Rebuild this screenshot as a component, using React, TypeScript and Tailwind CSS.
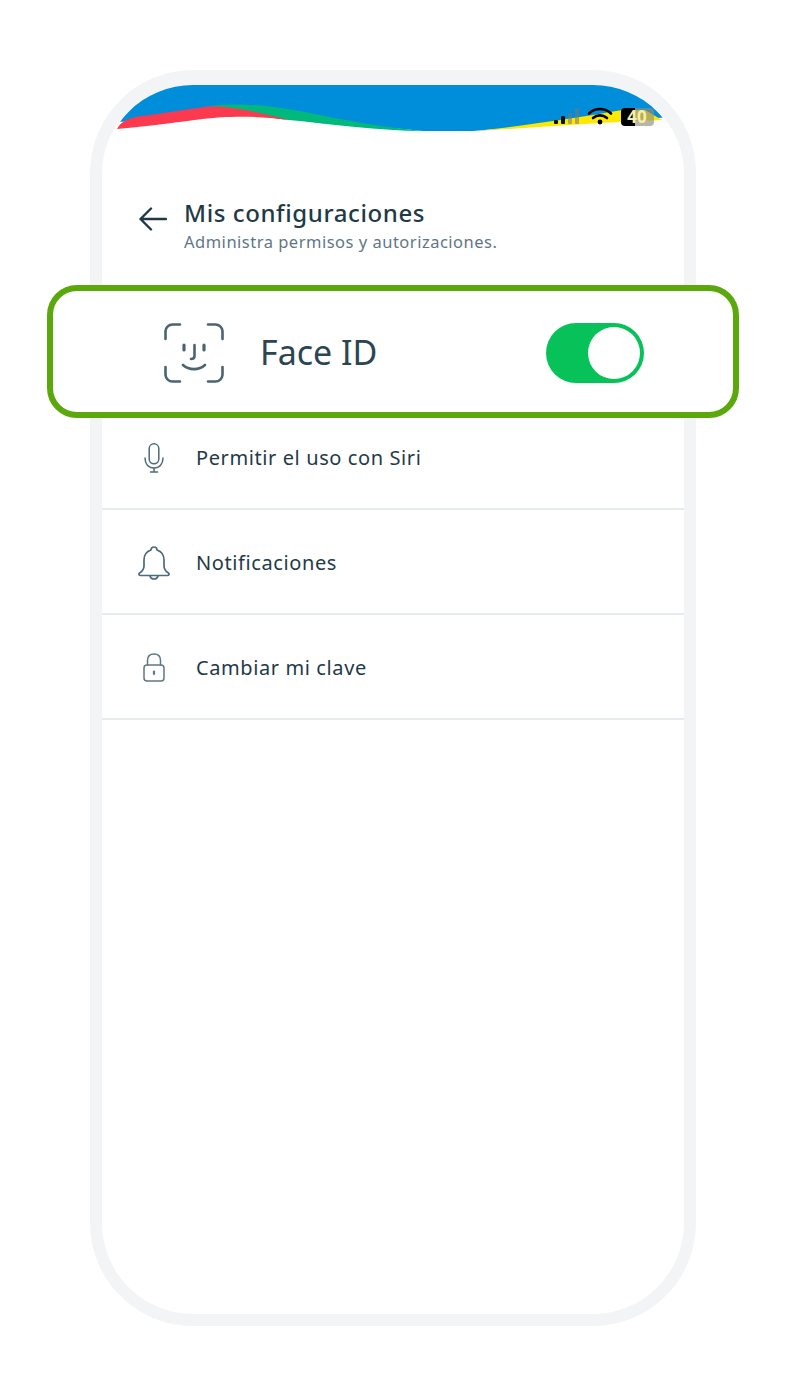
const font = { fontFamily: '"Noto Sans", sans-serif' };

const Wave = () => (
  <svg viewBox="102 85 582 50" className="block h-[50px] w-[582px]">
    <defs>
      <clipPath id="screen-top">
        <path d="M102 176A91 91 0 0 1 193 85H593A91 91 0 0 1 684 176Z" />
      </clipPath>
    </defs>
    <g clipPath="url(#screen-top)">
      <path d="M102 85H684V116L473 131H423L289 118L232 114L118 122L102 126Z" fill="#008edb" />
      <path d="M205 107C225 103 255 104 281 108C320 114 360 125 423 131C380 131 330 124 289 120C265 117 240 112 205 107Z" fill="#00b97a" />
      <path d="M117 129C122 120 130 117 150 115C170 112 190 109 205 107C222 105 250 110 289 120C265 117 245 116 231 117C205 117 175 124 117 129Z" fill="#fb3a4f" />
      <path d="M473 131C515 127 570 119 622 110H645L662 120C600 122 530 128 473 131Z" fill="#ffe800" />
    </g>
    <rect x="554" y="120" width="4" height="4" rx="1" fill="#111" />
    <rect x="561" y="116" width="4" height="8" rx="1" fill="#111" />
    <rect x="568" y="113" width="4" height="11" rx="1" fill="#777" opacity="0.55" />
    <rect x="575" y="108" width="4" height="16" rx="1" fill="#777" opacity="0.55" />
    <g fill="none" stroke="#000" strokeWidth="2.6" strokeLinecap="round">
      <path d="M589 113.500C595 107.500 605 107.500 611 113.500" />
      <path d="M593 118C597 114.500 603 114.500 607 118" />
    </g>
    <circle cx="600" cy="122" r="2.400" fill="#000" />
    <path d="M625 108H635V126H625A4 4 0 0 1 621 122V112A4 4 0 0 1 625 108Z" fill="#000" />
    <path d="M635 108H650A4 4 0 0 1 654 112V122A4 4 0 0 1 650 126H635Z" fill="#8f8f7e" opacity="0.65" />
    <text x="637" y="122.500" textAnchor="middle" fontSize="17" fontWeight="700" fill="#f4efb0" style={font}>40</text>
  </svg>
);

const BackArrow = () => (
  <svg width="28" height="24" viewBox="0 0 28 24" fill="none" stroke="#1f3a47" strokeWidth="2.4" strokeLinecap="round" strokeLinejoin="round">
    <path d="M1.5 12H27M12 1.5L1.5 12L12 22.5" />
  </svg>
);

const FaceIcon = () => (
  <svg width="60" height="60" viewBox="0 0 60 60" fill="none" stroke="#4a6472" strokeWidth="2.6" strokeLinecap="round" strokeLinejoin="round">
    <path d="M1.5 16V8A7 7 0 0 1 8.500 1.500H16M44 1.500H51.500A7 7 0 0 1 58.500 8V16M58.500 44V52A7 7 0 0 1 51.500 58.500H44M16 58.500H8.500A7 7 0 0 1 1.500 52V44" />
    <path d="M20 22V27M40 22V27" strokeWidth="3.200" />
    <path d="M30.500 22V33C30.500 35.500 29 36 27 36" />
    <path d="M19 42C25 47.500 35 47.500 41 42" />
  </svg>
);

const MicIcon = () => (
  <svg width="20" height="30" viewBox="0 0 20 30" fill="none" stroke="#4f6b78" strokeWidth="1.500" strokeLinecap="round">
    <rect x="5.200" y="0.800" width="9.600" height="20" rx="4.800" />
    <path d="M1 15C1 21 4.500 25 10 25C15.500 25 19 21 19 15M10 25V29M6.500 29H13.500" />
  </svg>
);

const BellIcon = () => (
  <svg width="32" height="34" viewBox="0 0 32 34" fill="none" stroke="#4f6b78" strokeWidth="1.700" strokeLinecap="round" strokeLinejoin="round">
    <path d="M16 1C18 1 19 2.500 19 4C23.500 5.500 26 9 26 14V20C26 23 28 25.500 30.500 27C31.500 28 31 29.500 29.500 29.500H2.500C1 29.500 0.500 28 1.500 27C4 25.500 6 23 6 20V14C6 9 8.500 5.500 13 4C13 2.500 14 1 16 1Z" />
    <path d="M12 30C12.500 32 14 33 16 33C18 33 19.500 32 20 30" />
  </svg>
);

const LockIcon = () => (
  <svg width="22" height="29" viewBox="0 0 22 29" fill="none" stroke="#5d7886" strokeWidth="1.500" strokeLinecap="round">
    <rect x="1" y="12" width="20" height="16" rx="3" />
    <path d="M4.500 12V7.500C4.500 3.500 7 1 11 1C15 1 17.500 3.500 17.500 7.500V12" />
    <path d="M11 18.500V21" strokeWidth="2.200" />
  </svg>
);

const rows = [
  { label: "Permitir el uso con Siri", icon: <MicIcon /> },
  { label: "Notificaciones", icon: <BellIcon /> },
  { label: "Cambiar mi clave", icon: <LockIcon /> },
];

const App = () => {
  return (
    <div className="h-[1396px] w-[785px] overflow-hidden bg-white pl-[90px] pt-[70px]" style={font}>
      <div className="h-[1256px] w-[606px] rounded-[103px] border-x-[12px] border-b-[12px] border-t-[15px] border-[#f3f4f6] bg-white">
        <Wave />

        <div className="ml-[37px] mt-[64px] flex items-start">
          <div className="mt-[8px] w-[45px]">
            <BackArrow />
          </div>
          <div>
            <h1 className="text-[24px] font-medium leading-[28px] tracking-[0.6px] text-[#1f3a47]">Mis configuraciones</h1>
            <p className="mt-[4px] text-[16.500px] leading-[22px] tracking-[0.5px] text-[#5f7785]">Administra permisos y autorizaciones.</p>
          </div>
        </div>

        <div className="relative z-10 -ml-[55px] mt-[32px] flex h-[133px] w-[692px] items-center rounded-[30px] border-[6px] border-[#5aa80c] bg-white pl-[111px] pr-[89px] pt-[3px]">
          <FaceIcon />
          <span className="-mt-[2px] ml-[36px] flex-1 text-[34px] leading-none text-[#2c4552]">Face ID</span>
          <div className="flex h-[60px] w-[98px] items-center justify-end rounded-full bg-[#06c258] pr-[4px]">
            <div className="h-[52px] w-[52px] rounded-full bg-white" />
          </div>
        </div>

        <div className="-mt-[13px]">
          {rows.map((row) => (
            <div key={row.label} className="flex h-[105px] items-center border-b-2 border-[#e6ecee] pt-[2px]">
              <div className="flex w-[94px] justify-center pl-[10px]">{row.icon}</div>
              <span className="text-[20px] tracking-[0.6px] text-[#1f3a47]">{row.label}</span>
            </div>
          ))}
        </div>
      </div>
    </div>
  );
};

export default App;
